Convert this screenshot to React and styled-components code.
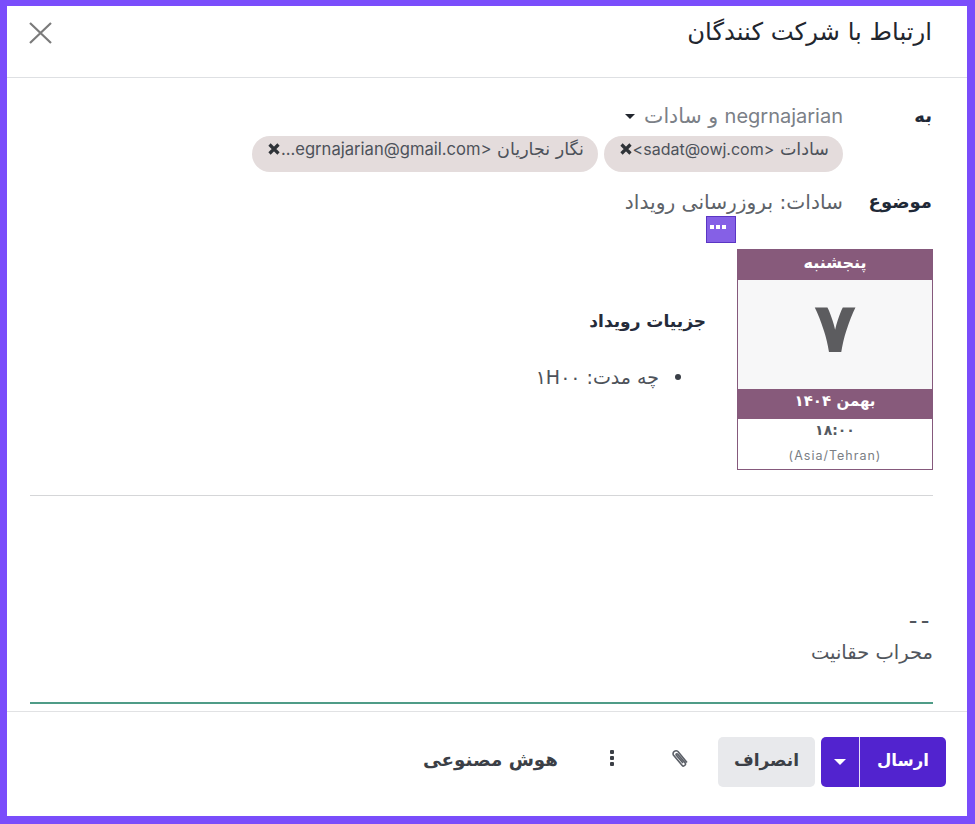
import React from "react";
import styled, { createGlobalStyle } from "styled-components";

const Global = createGlobalStyle`
  html, body { margin: 0; padding: 0; background: #7c4dff; }
  body { font-family: "DejaVu Sans", "Noto Sans", sans-serif; }
  * { box-sizing: border-box; }
`;

const Frame = styled.div`
  width: 975px;
  height: 824px;
  padding: 6px 8px 8px 7px;
  background: #7a4dfb;
`;
const Dialog = styled.div`
  height: 810px;
  background: #fff;
  display: flex;
  flex-direction: column;
  color: #2b3140;
`;
const Header = styled.header`
  height: 72px;
  flex: none;
  border-bottom: 1.5px solid #dee0e3;
  display: flex;
  justify-content: space-between;
  direction: rtl;
  padding: 12px 35px 0 13px;
`;
const Title = styled.h1`
  margin: 0;
  font-size: 24.3px;
  line-height: 28px;
  font-weight: 400;
  color: #22262e;
`;
const CloseButton = styled.button`
  border: 0;
  background: none;
  padding: 0;
  width: 40px;
  height: 30px;
  color: #7b7b7b;
`;
const Body = styled.div`
  flex: 1;
  direction: rtl;
  padding: 25px 34px 0 23px;
  display: flex;
  flex-direction: column;
  min-height: 0;
`;
const FieldRow = styled.div`
  display: grid;
  grid-template-columns: 89px 1fr;
  align-items: start;
  padding-right: 1px;
`;
const Label = styled.div`
  font-size: 18px;
  line-height: 26px;
  font-weight: 700;
  color: #1f2937;
`;
const Latin = styled.span`
  font-family: "Inter", sans-serif;
  font-size: ${(p) => p.$size}px;
`;
const Recipients = styled.div`
  display: flex;
  align-items: center;
  gap: 9px;
  height: 26px;
  font-size: 20.5px;
  line-height: 26px;
  color: #7b8087;
`;
const Caret = styled.span`
  width: 0;
  height: 0;
  border-left: 5.5px solid transparent;
  border-right: 5.5px solid transparent;
  border-top: 5.5px solid #22262e;
`;
const Pills = styled.div`
  display: flex;
  gap: 6px;
  margin-top: 7px;
`;
const Pill = styled.div`
  height: 36px;
  border-radius: 18px;
  background: #e4dcdc;
  padding: 0 14px 10px 15px;
  display: flex;
  align-items: center;
  gap: 1px;
  font-size: 17.5px;
  color: #4d525a;
  white-space: nowrap;
  width: ${(p) => p.$w}px;
  overflow: hidden;
`;
const PillClose = styled.span`
  display: inline-flex;
  color: #2f3338;
`;
const SubjectRow = styled(FieldRow)`
  margin-top: 17px;
`;
const SubjectText = styled.div`
  font-size: 20.2px;
  line-height: 26px;
  color: #5e6369;
`;
const MoreWrap = styled.div`
  display: flex;
  padding-right: 197px;
  margin-top: 1px;
`;
const MoreButton = styled.button`
  width: 30px;
  height: 27px;
  border: 1px solid #5a35c4;
  background: #8560e6;
  padding: 0 7px 5px 0;
  display: flex;
  align-items: center;
  justify-content: center;
  gap: 2px;
`;
const Dot = styled.span`
  width: 4px;
  height: 4px;
  background: #fff;
`;
const EventArea = styled.div`
  display: flex;
  margin-top: 6px;
  gap: 31px;
`;
const Calendar = styled.div`
  width: 196px;
  height: 221px;
  border: 1px solid #85597c;
  display: flex;
  flex-direction: column;
  flex: none;
  text-align: center;
`;
const CalBand = styled.div`
  background: #875a7b;
  color: #fff;
  font-weight: 700;
  font-size: ${(p) => p.$size}px;
  height: 30px;
  line-height: 25px;
  flex: none;
`;
const CalDay = styled.div`
  height: 109px;
  flex: none;
  background: #f7f7f8;
  font-size: 70px;
  font-weight: 700;
  line-height: 96px;
  color: #5c5c5f;
`;
const CalTime = styled.div`
  font-size: 14px;
  font-weight: 700;
  color: #555a62;
  line-height: 22px;
`;
const CalZone = styled.div`
  font-size: 12.5px;
  color: #7a7e84;
  line-height: 30px;
  font-family: "Inter", sans-serif;
  letter-spacing: 1px;
`;
const Details = styled.div`
  padding-top: 59px;
`;
const DetailsTitle = styled.h3`
  margin: 0;
  font-size: 17px;
  line-height: 26px;
  font-weight: 700;
  color: #252b3a;
`;
const DetailList = styled.ul`
  margin: 31px 0 0;
  padding: 0 25px 0 0;
  list-style: none;
  font-size: 19px;
  line-height: 24px;
  color: #4d525a;
`;
const DetailItem = styled.li`
  display: flex;
  align-items: center;
  gap: 16px;
  &::before {
    content: "";
    width: 6px;
    height: 6px;
    border-radius: 50%;
    background: #3a3f47;
  }
`;
const Rule = styled.hr`
  border: 0;
  border-top: 1.5px solid #d5d6d8;
  margin: 25px 0 0;
`;
const Signature = styled.div`
  margin-top: 109px;
  font-size: 19.5px;
  line-height: 32px;
  color: #51565d;
`;
const Dashes = styled.div`
  font-size: 24px;
  letter-spacing: 3.5px;
`;
const GreenRule = styled.div`
  height: 2px;
  background: #4f9c87;
  margin-top: 33px;
`;
const Footer = styled.footer`
  height: 105px;
  flex: none;
  border-top: 1.5px solid #e1e2e4;
  direction: rtl;
  display: flex;
  align-items: flex-start;
  padding: 25px 21px 0 0;
`;
const SendGroup = styled.div`
  display: flex;
  height: 50px;
  border-radius: 5px;
  overflow: hidden;
  background: #5223cf;
  color: #fff;
`;
const SendButton = styled.button`
  width: 87px;
  border: 0;
  background: none;
  color: #fff;
  padding: 0 0 4px;
  font: 700 16.5px "DejaVu Sans", sans-serif;
  border-left: 1.5px solid #e6e0f8;
`;
const SendCaret = styled.button`
  width: 38px;
  border: 0;
  background: none;
  display: flex;
  align-items: center;
  justify-content: center;
  padding: 0;
`;
const WhiteCaret = styled(Caret)`
  border-left-width: 6.5px;
  border-right-width: 6.5px;
  border-top: 6.5px solid #fff;
`;
const CancelButton = styled.button`
  margin-right: 6px;
  width: 97px;
  height: 50px;
  border: 0;
  border-radius: 5px;
  background: #e8e9ec;
  color: #3b3f46;
  padding: 0 0 4px;
  font: 700 17px "DejaVu Sans", sans-serif;
`;
const IconButton = styled.button`
  border: 0;
  background: none;
  padding: 0 0 9px;
  width: ${(p) => p.$w}px;
  height: 50px;
  display: flex;
  align-items: center;
  justify-content: center;
  color: #3b3f46;
`;
const AiButton = styled.button`
  border: 0;
  background: none;
  padding: 0 0 5px;
  height: 50px;
  margin-right: 24px;
  color: #3b3f46;
  font: 700 18.3px "DejaVu Sans", sans-serif;
`;

const SmallX = () => (
  <svg width="12" height="12" viewBox="0 0 12 12">
    <path d="M1.5 1.5 L10.5 10.5 M10.5 1.5 L1.5 10.5" stroke="currentColor" strokeWidth="3.2" />
  </svg>
);

const Clip = () => (
  <svg width="20" height="20" viewBox="0 0 20 20" fill="none" stroke="#5c6068" strokeWidth="1.6">
    <path d="M17 14.5 L8 3.5 a3 3 0 0 0 -4.6 3.6 L12 17.2 a1.9 1.9 0 0 0 3 -2.4 L7.6 6 a0.9 0.9 0 0 0 -1.4 1.1 L13 15" />
  </svg>
);

export default function App() {
  return (
    <Frame>
      <Global />
      <Dialog>
        <Header>
          <Title>ارتباط با شرکت کنندگان</Title>
          <CloseButton aria-label="بستن">
            <svg width="24" height="24" viewBox="0 0 24 24" fill="none" stroke="currentColor" strokeWidth="2.2">
              <path d="M2 3 L23 23 M23 3 L2 23" />
            </svg>
          </CloseButton>
        </Header>
        <Body>
          <FieldRow>
            <Label>به</Label>
            <div>
              <Recipients>
                <span><Latin $size={20}>negrnajarian</Latin> و سادات</span>
                <Caret />
              </Recipients>
              <Pills>
                <Pill $w={239}>
                  <span>سادات <Latin $size={16} dir="ltr">&lt;sadat@owj.com&gt;</Latin></span>
                  <PillClose><SmallX /></PillClose>
                </Pill>
                <Pill $w={346}>
                  <span>نگار نجاریان <Latin $size={16.6} dir="ltr">...egrnajarian@gmail.com&gt;</Latin></span>
                  <PillClose><SmallX /></PillClose>
                </Pill>
              </Pills>
            </div>
          </FieldRow>
          <SubjectRow>
            <Label>موضوع</Label>
            <SubjectText>سادات: بروزرسانی رویداد</SubjectText>
          </SubjectRow>
          <MoreWrap>
            <MoreButton aria-label="بیشتر"><Dot /><Dot /><Dot /></MoreButton>
          </MoreWrap>
          <EventArea>
            <Calendar>
              <CalBand $size={16}>پنجشنبه</CalBand>
              <CalDay>۷</CalDay>
              <CalBand $size={15}>بهمن ۱۴۰۴</CalBand>
              <CalTime>۱۸:۰۰</CalTime>
              <CalZone>(Asia/Tehran)</CalZone>
            </Calendar>
            <Details>
              <DetailsTitle>جزییات رویداد</DetailsTitle>
              <DetailList>
                <DetailItem><span>چه مدت: ۱H۰۰</span></DetailItem>
              </DetailList>
            </Details>
          </EventArea>
          <Rule />
          <Signature>
            <Dashes>--</Dashes>
            <div>محراب حقانیت</div>
          </Signature>
          <GreenRule />
        </Body>
        <Footer>
          <SendGroup>
            <SendButton>ارسال</SendButton>
            <SendCaret aria-label="گزینه‌ها"><WhiteCaret /></SendCaret>
          </SendGroup>
          <CancelButton>انصراف</CancelButton>
          <IconButton $w={76} aria-label="پیوست"><Clip /></IconButton>
          <IconButton $w={60} aria-label="بیشتر">
            <svg width="6" height="18" viewBox="0 0 6 18" fill="#3b3f46">
              <rect x="1" y="1" width="4" height="4" rx="1" />
              <rect x="1" y="7" width="4" height="4" rx="1" />
              <rect x="1" y="13" width="4" height="4" rx="1" />
            </svg>
          </IconButton>
          <AiButton>هوش مصنوعی</AiButton>
        </Footer>
      </Dialog>
    </Frame>
  );
}
